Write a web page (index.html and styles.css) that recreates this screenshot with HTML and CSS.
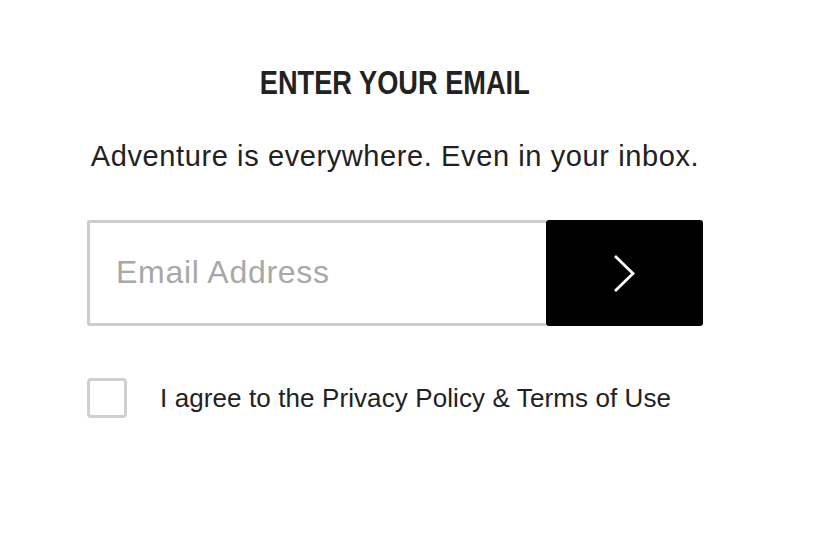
FILE: index.html
```html
<!DOCTYPE html>
<html lang="en">
<head>
<meta charset="utf-8">
<title>Enter your email</title>
<link rel="stylesheet" href="styles.css">
</head>
<body>
<main class="signup">
  <h1 class="signup-title"><span class="signup-title-text">ENTER YOUR EMAIL</span></h1>
  <p class="signup-sub">Adventure is everywhere. Even in your inbox.</p>
  <form class="signup-form" onsubmit="return false">
    <input class="signup-input" type="email" placeholder="Email Address">
    <button class="signup-btn" type="submit" aria-label="Submit">
      <svg class="chev" width="22" height="37" viewBox="0 0 22 37" aria-hidden="true">
        <path d="M2 2 L19 18.5 L2 35" fill="none" stroke="#fff" stroke-width="2.8" stroke-linecap="square" stroke-linejoin="miter"/>
      </svg>
    </button>
  </form>
  <label class="agree">
    <span class="agree-box"></span>
    <span class="agree-text">I agree to the Privacy Policy &amp; Terms of Use</span>
  </label>
</main>
</body>
</html>
```
FILE: styles.css
```css
html, body {
  margin: 0;
  padding: 0;
  background: #fff;
}
body {
  font-family: "Liberation Sans", Arial, sans-serif;
  color: #222;
}
.signup {
  width: 616px;
  margin-left: 87px;
  padding-top: 62px;
  display: flex;
  flex-direction: column;
}
.signup-title {
  margin: 0;
  text-align: center;
  font-family: "Liberation Sans", Arial, sans-serif;
  font-weight: bold;
  font-size: 34px;
  line-height: 40px;
  color: #222;
}
.signup-title-text {
  display: inline-block;
  transform: scaleX(0.8);
  letter-spacing: 0;
}
.signup-sub {
  margin: 37px 0 0;
  text-align: center;
  font-size: 29px;
  line-height: 34px;
  letter-spacing: 0.6px;
  color: #222;
}
.signup-form {
  margin-top: 47px;
  display: flex;
  height: 106px;
}
.signup-input {
  box-sizing: border-box;
  width: 459px;
  height: 106px;
  margin: 0;
  border: 3px solid #cdcdcd;
  border-right: 0;
  border-radius: 3px 0 0 3px;
  padding: 0 0 1px 26px;
  font-family: "Liberation Sans", Arial, sans-serif;
  font-size: 32px;
  letter-spacing: 0.7px;
  color: #222;
  outline: none;
  background: #fff;
}
.signup-input::placeholder {
  color: #a8a8a8;
}
.signup-btn {
  box-sizing: border-box;
  width: 157px;
  height: 106px;
  margin: 0;
  border: 0;
  border-radius: 3px;
  background: #000;
  display: flex;
  align-items: center;
  justify-content: center;
  padding: 0;
  cursor: pointer;
}
.agree {
  margin-top: 52px;
  display: flex;
  align-items: center;
  gap: 33px;
}
.agree-box {
  box-sizing: border-box;
  width: 40px;
  height: 40px;
  border: 3px solid #d0d0d0;
  border-radius: 4px;
  flex: none;
}
.agree-text {
  font-size: 26px;
  line-height: 30px;
  letter-spacing: 0.1px;
  color: #222;
}
```
